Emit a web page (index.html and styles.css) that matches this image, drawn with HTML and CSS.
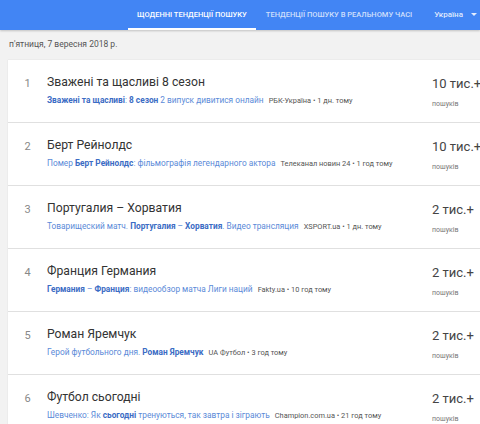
FILE: index.html
```html
<!DOCTYPE html>
<html lang="uk">
<head>
<meta charset="utf-8">
<link rel="stylesheet" href="styles.css">
</head>
<body>
<header class="topbar">
  <nav class="tabs">
    <a class="tab active">ЩОДЕННІ ТЕНДЕНЦІЇ ПОШУКУ</a>
    <a class="tab">ТЕНДЕНЦІЇ ПОШУКУ В РЕАЛЬНОМУ ЧАСІ</a>
  </nav>
  <div class="country">Україна <span class="caret"></span></div>
</header>
<div class="date">п'ятниця, 7 вересня 2018 р.</div>
<section class="card">
  <div class="row">
    <div class="num">1</div>
    <div class="main">
      <div class="title">Зважені та щасливі 8 сезон</div>
      <div class="snippet"><b>Зважені та щасливі</b>: <b>8 сезон</b> 2 випуск дивитися онлайн <span class="src">РБК-Україна • 1 дн. тому</span></div>
    </div>
    <div class="count"><div class="big">10 тис.+</div><div class="small">пошуків</div></div>
  </div>
  <div class="row">
    <div class="num">2</div>
    <div class="main">
      <div class="title">Берт Рейнолдс</div>
      <div class="snippet">Помер <b>Берт Рейнолдс</b>: фільмографія легендарного актора <span class="src">Телеканал новин 24 • 1 год тому</span></div>
    </div>
    <div class="count"><div class="big">10 тис.+</div><div class="small">пошуків</div></div>
  </div>
  <div class="row">
    <div class="num">3</div>
    <div class="main">
      <div class="title">Португалия – Хорватия</div>
      <div class="snippet">Товарищеский матч. <b>Португалия</b> – <b>Хорватия</b>. Видео трансляция <span class="src">XSPORT.ua • 1 дн. тому</span></div>
    </div>
    <div class="count"><div class="big">2 тис.+</div><div class="small">пошуків</div></div>
  </div>
  <div class="row">
    <div class="num">4</div>
    <div class="main">
      <div class="title">Франция Германия</div>
      <div class="snippet"><b>Германия</b> – <b>Франция</b>: видеообзор матча Лиги наций <span class="src">Fakty.ua • 10 год тому</span></div>
    </div>
    <div class="count"><div class="big">2 тис.+</div><div class="small">пошуків</div></div>
  </div>
  <div class="row">
    <div class="num">5</div>
    <div class="main">
      <div class="title">Роман Яремчук</div>
      <div class="snippet">Герой футбольного дня. <b>Роман Яремчук</b> <span class="src">UA Футбол • 3 год тому</span></div>
    </div>
    <div class="count"><div class="big">2 тис.+</div><div class="small">пошуків</div></div>
  </div>
  <div class="row">
    <div class="num">6</div>
    <div class="main">
      <div class="title">Футбол сьогодні</div>
      <div class="snippet">Шевченко: Як <b>сьогодні</b> тренуються, так завтра і зіграють <span class="src">Champion.com.ua • 21 год тому</span></div>
    </div>
    <div class="count"><div class="big">2 тис.+</div><div class="small">пошуків</div></div>
  </div>
</section>
</body>
</html>
```
FILE: styles.css
```css
html, body {
  margin: 0;
  padding: 0;
}
body {
  width: 480px;
  height: 424px;
  overflow: hidden;
  background: #f2f2f2;
  font-family: Roboto, "Noto Sans", Arial, sans-serif;
}
.topbar {
  height: 30px;
  background: #4285f4;
  display: flex;
  align-items: stretch;
  box-shadow: 0 1px 2px rgba(0,0,0,0.2);
}
.tabs {
  display: flex;
  margin-left: 128px;
}
.tab {
  display: flex;
  align-items: center;
  padding: 0 9px;
  font-size: 7.5px;
  font-weight: 500;
  color: rgba(255,255,255,0.75);
  border-bottom: 2px solid transparent;
  white-space: nowrap;
}
.tab.active {
  color: #fff;
  border-bottom-color: #fff;
  margin-right: 1px;
}
.country {
  margin-left: auto;
  display: flex;
  align-items: center;
  gap: 8px;
  padding-right: 3px;
  color: rgba(255,255,255,0.85);
  font-size: 8px;
  font-weight: 500;
  margin-top: -1px;
}
.caret {
  width: 0;
  height: 0;
  border-left: 3px solid transparent;
  border-right: 3px solid transparent;
  border-top: 3px solid rgba(255,255,255,0.85);
}
.date {
  padding: 9px 0 0 9px;
  height: 21px;
  font-size: 8.5px;
  color: #555;
}
.card {
  margin-left: 8px;
  background: #fff;
  box-shadow: 0 0 1px rgba(0,0,0,0.15);
}
.row {
  display: flex;
  height: 62px;
  border-bottom: 1px solid #e0e0e0;
}
.num {
  width: 39px;
  padding-top: 17px;
  text-align: center;
  font-size: 11px;
  color: #888;
}
.main {
  flex: 1;
  padding-top: 15px;
}
.title {
  font-size: 12.2px;
  color: #333;
  height: 20px;
}
.snippet {
  font-size: 8.3px;
  color: #5b8ad8;
  white-space: nowrap;
}
.snippet b {
  font-weight: 700;
  color: #3b6cc4;
}
.src {
  font-size: 7.4px;
  color: #555;
  margin-left: 3px;
}
.count {
  width: 48px;
  padding-top: 16px;
  white-space: nowrap;
}
.big {
  font-size: 13px;
  color: #444;
  height: 24px;
}
.small {
  font-size: 7px;
  color: #777;
}
```
